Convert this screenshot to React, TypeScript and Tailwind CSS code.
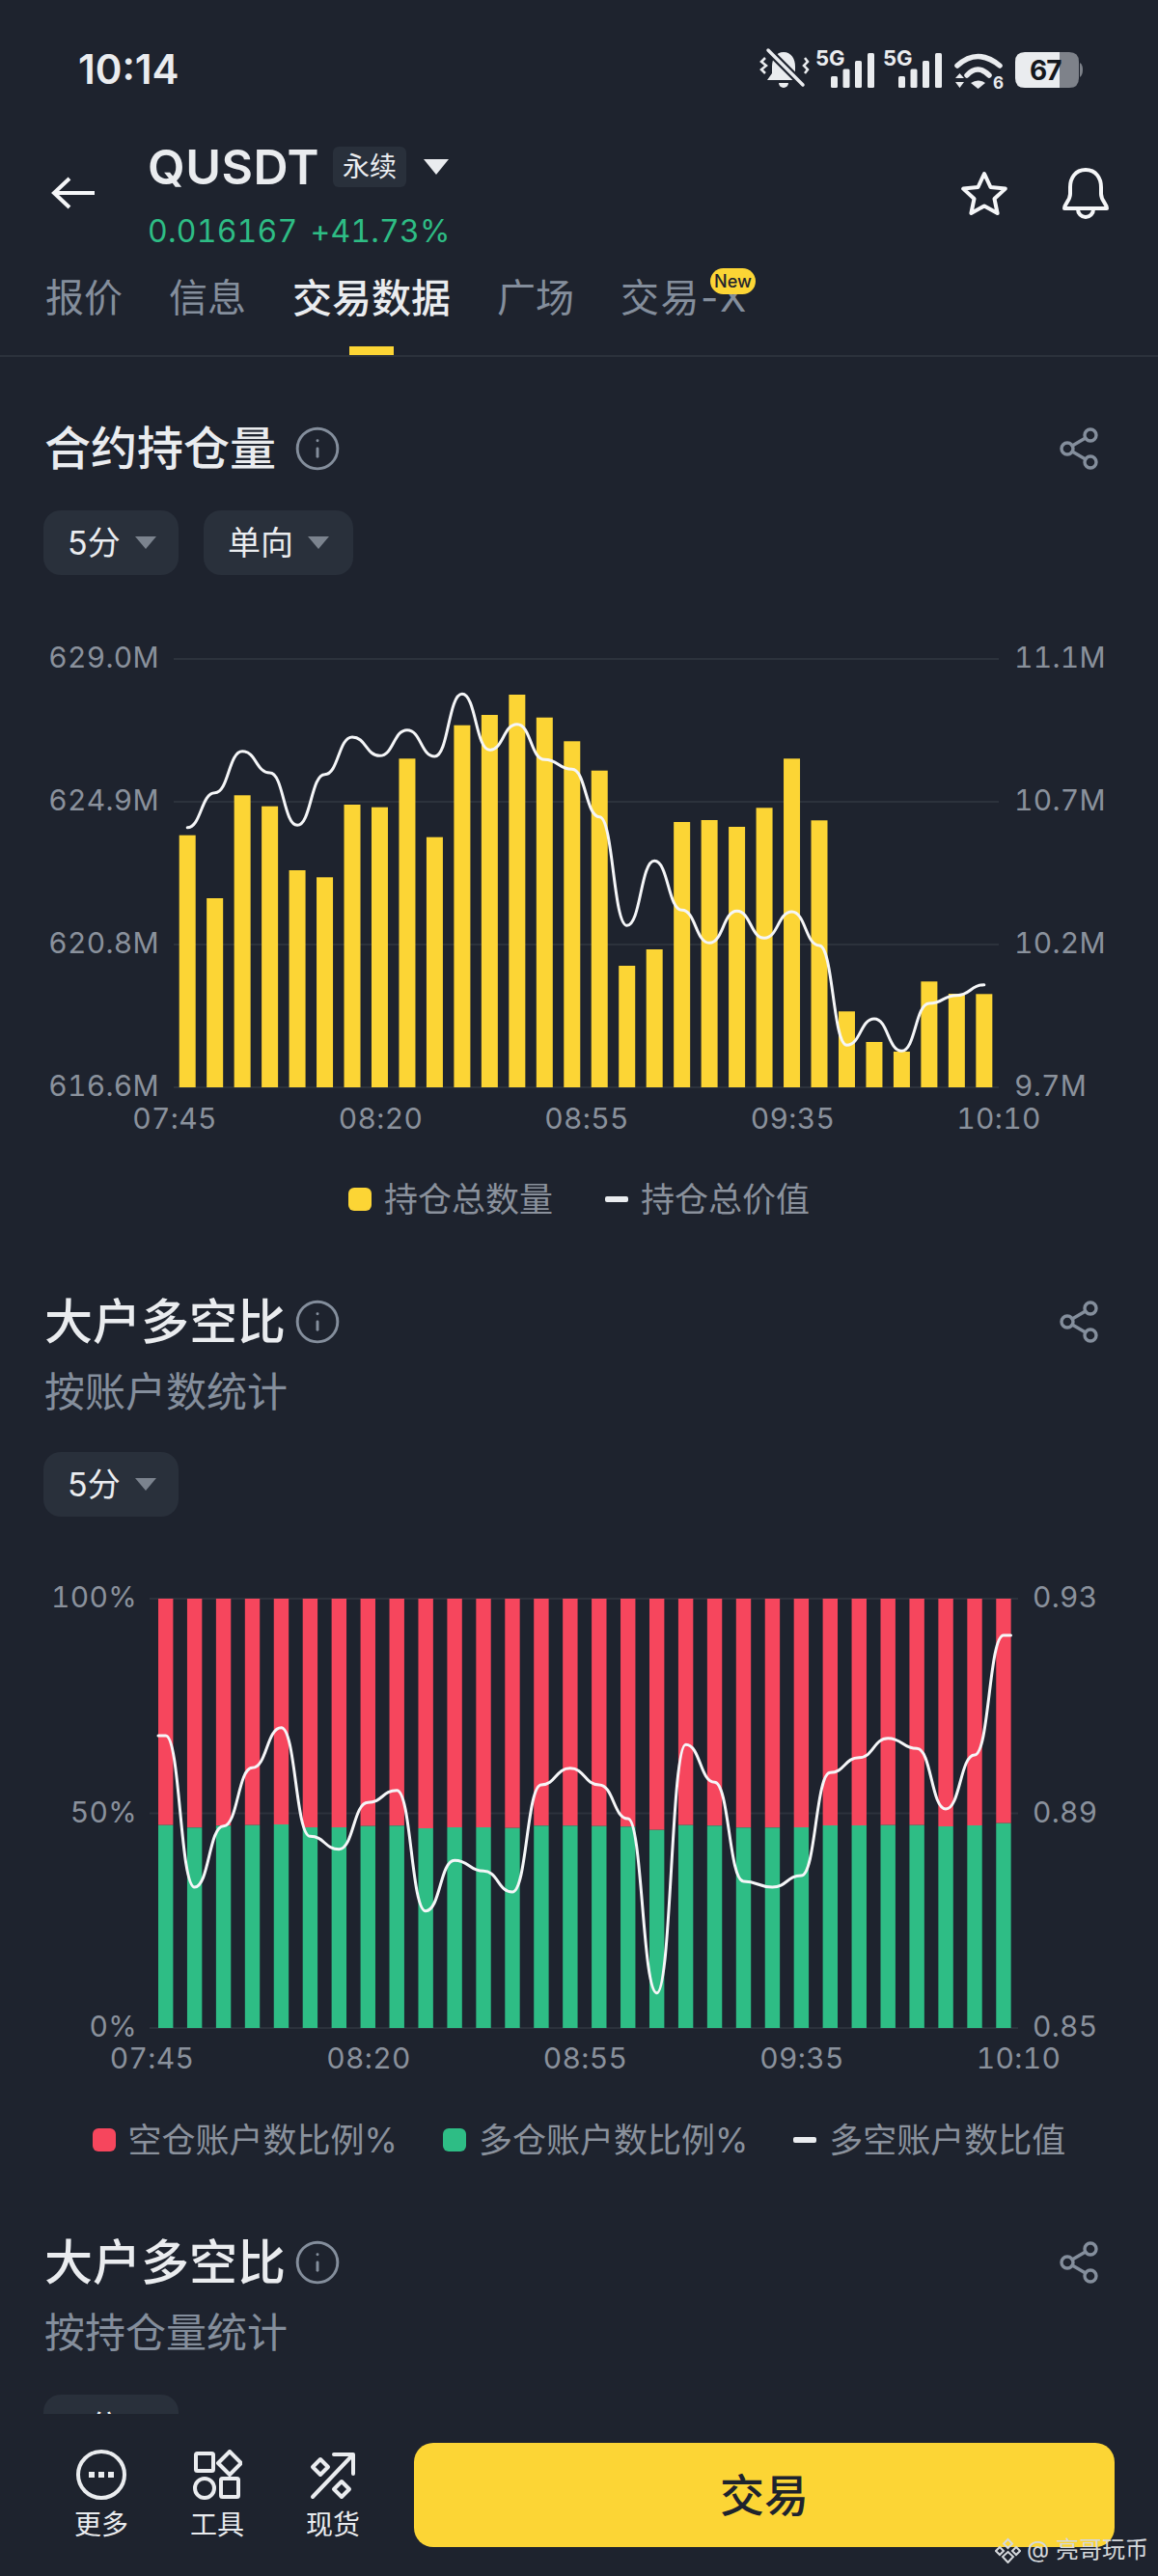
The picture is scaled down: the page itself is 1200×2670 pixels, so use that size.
import { Info, Share2 } from 'lucide-react';

type Point = [number, number];

const FONT = "font-['Inter','Noto_Sans_CJK_SC',sans-serif]";

// open interest chart, values are y positions in the chart's viewBox
const OI_BARS = [
  865.7, 931, 824.3, 835.7, 902, 909.3, 834, 836.7, 786.3, 867.7, 751.7, 741, 720, 743.7, 768.3,
  798.7, 1001, 984, 852, 850, 857, 837.3, 786.3, 850.3, 1048.3, 1080, 1090, 1017.3, 1030, 1030.3,
];
const OI_LINE = [
  857.7, 821.7, 778.7, 801, 855.3, 802.7, 764, 783.3, 756.7, 784, 719.3, 777.3, 750.7, 787.3, 797.3,
  846.7, 959.3, 892.3, 943.3, 977.3, 944.3, 972.3, 945, 980, 1083.3, 1056, 1089.3, 1040, 1031.7, 1020.7,
];

// long/short ratio chart
const RATIO_BARS = [
  1891.7, 1894.3, 1892.3, 1891.7, 1891, 1894, 1894, 1892.7, 1892.3, 1895, 1894, 1894, 1894.7, 1892.3,
  1892.3, 1892.7, 1893.3, 1896.7, 1891.7, 1892.3, 1894.3, 1894.3, 1894, 1892, 1892, 1891.7, 1891.7,
  1893, 1892, 1889.7,
];
const RATIO_LINE = [
  1799, 1956, 1892.7, 1832.3, 1790.7, 1903.3, 1916.7, 1868.3, 1855.7, 1980.7, 1928.3, 1939.3, 1961,
  1850, 1832.7, 1850, 1885, 2065.7, 1808.3, 1847.3, 1950, 1956, 1944, 1837.3, 1821.7, 1801.7, 1812.3,
  1875, 1819, 1695,
];

// flat tangents at each point give the line its shoulders
function smoothPath(pts: Point[]) {
  return pts.reduce((d, [x, y], i) => {
    if (i === 0) return `M${x} ${y}`;
    const [px, py] = pts[i - 1];
    const k = (x - px) / 2;
    return `${d} C${px + k} ${py} ${x - k} ${y} ${x} ${y}`;
  }, '');
}

function AxisText({ x, y, anchor, children }: { x: number; y: number; anchor: 'start' | 'middle' | 'end'; children: string }) {
  return (
    <text x={x} y={y} textAnchor={anchor} dominantBaseline="central" className="fill-[#8a919c] text-[30px] tracking-[0.3px] tabular-nums">
      {children}
    </text>
  );
}

function OpenInterestChart() {
  const ys = [683, 831, 979, 1127];
  const left = ['629.0M', '624.9M', '620.8M', '616.6M'];
  const right = ['11.1M', '10.7M', '10.2M', '9.7M'];
  const xs = ['07:45', '08:20', '08:55', '09:35', '10:10'];
  const line = OI_LINE.map((y, i): Point => [194.2 + i * 28.47, y]);
  return (
    <svg viewBox="0 660 1200 520" className="mt-[64px] block h-[520px] w-[1200px]">
      {ys.map((y) => (
        <line key={y} x1="180" x2="1035" y1={y} y2={y} stroke="#2c323c" strokeWidth="2" />
      ))}
      {OI_BARS.map((top, i) => (
        <rect key={i} x={185.7 + i * 28.47} y={top} width="17" height={1127 - top} fill="#fcd535" />
      ))}
      <path d={smoothPath(line)} fill="none" stroke="#f5f6f8" strokeWidth="3" strokeLinecap="round" />
      {ys.map((y, i) => (
        <AxisText key={y} x={165} y={y - 2} anchor="end">{left[i]}</AxisText>
      ))}
      {ys.map((y, i) => (
        <AxisText key={y} x={1051} y={y - 2} anchor="start">{right[i]}</AxisText>
      ))}
      {xs.map((t, i) => (
        <AxisText key={t} x={181 + i * 213.5} y={1159} anchor="middle">{t}</AxisText>
      ))}
    </svg>
  );
}

function RatioChart() {
  const ys = [1657, 1879.5, 2102];
  const left = ['100%', '50%', '0%'];
  const right = ['0.93', '0.89', '0.85'];
  const xs = ['07:45', '08:20', '08:55', '09:35', '10:10'];
  const centers = RATIO_LINE.map((y, i): Point => [171.7 + i * 29.94, y]);
  const line: Point[] = [[164, RATIO_LINE[0]], ...centers, [1047.5, RATIO_LINE[29]]];
  return (
    <svg viewBox="0 1630 1200 530" className="mt-[58px] block h-[530px] w-[1200px]">
      {ys.map((y) => (
        <line key={y} x1="155" x2="1055" y1={y} y2={y} stroke="#2c323c" strokeWidth="2" />
      ))}
      {RATIO_BARS.map((top, i) => (
        <g key={i}>
          <rect x={164 + i * 29.94} y="1657" width="15.4" height={top - 1657} fill="#f6465d" />
          <rect x={164 + i * 29.94} y={top} width="15.4" height={2102 - top} fill="#2ebd85" />
        </g>
      ))}
      <path d={smoothPath(line)} fill="none" stroke="#f5f6f8" strokeWidth="3" strokeLinecap="round" />
      {ys.map((y, i) => (
        <AxisText key={y} x={142} y={y - 2} anchor="end">{left[i]}</AxisText>
      ))}
      {ys.map((y, i) => (
        <AxisText key={y} x={1070} y={y - 2} anchor="start">{right[i]}</AxisText>
      ))}
      {xs.map((t, i) => (
        <AxisText key={t} x={157.5 + i * 224.5} y={2133} anchor="middle">{t}</AxisText>
      ))}
    </svg>
  );
}

function StatusIcons() {
  const signal = (dx: number) => (
    <g fill="#eaecef">
      <text x={845 + dx} y="67" className="text-[22px] font-bold">5G</text>
      <rect x={861 + dx} y="78" width="7" height="12" rx="1.5" />
      <rect x={873.5 + dx} y="70.5" width="7" height="19.5" rx="1.5" />
      <rect x={886 + dx} y="62" width="7" height="28" rx="1.5" />
      <rect x={899 + dx} y="54" width="7" height="36" rx="1.5" />
    </g>
  );
  return (
    <svg viewBox="786 46 338 48" className="h-[48px] w-[338px]">
      {/* muted + vibrate bell */}
      <path d="M812 53C804 53 800 60 800 68V75L795 82H829L824 75V68C824 60 820 53 812 53Z" fill="#eaecef" />
      <path d="M807 85H817A5 5 0 0 1 807 85Z" fill="#eaecef" />
      <line x1="795" y1="50" x2="832" y2="87" stroke="#1e232e" strokeWidth="8" />
      <line x1="796" y1="51" x2="832" y2="87" stroke="#eaecef" strokeWidth="3.5" strokeLinecap="round" />
      <path d="M793 59L789 63L794 67L789 71L793 75" fill="none" stroke="#eaecef" strokeWidth="2.5" />
      <path d="M834 59L837 63L833 67L837 71L834 75" fill="none" stroke="#eaecef" strokeWidth="2.5" />
      {signal(0)}
      {signal(70)}
      {/* wifi 6 */}
      <path d="M992 67Q1013 48 1036 67" fill="none" stroke="#eaecef" strokeWidth="5.5" strokeLinecap="round" />
      <path d="M1002 77Q1013 65 1025 77" fill="none" stroke="#eaecef" strokeWidth="5.5" strokeLinecap="round" />
      <path d="M1006 85Q1013.5 80 1021 85L1013.5 91Z" fill="#eaecef" />
      <path d="M990 80L994.5 75L999 80ZM990 84H999L994.5 90Z" fill="#eaecef" />
      <text x="1029" y="91" fill="#eaecef" className="text-[17px] font-bold">6</text>
      {/* battery */}
      <path d="M1098 53H1108Q1118 53 1118 63V80Q1118 90 1108 90H1098Z" fill="#7e828a" />
      <path d="M1119 64Q1122 66 1122 71Q1122 77 1119 79Z" fill="#7e828a" />
      <path d="M1062 53H1098V90H1062Q1052 90 1052 80V63Q1052 53 1062 53Z" fill="#eaecef" />
      <text x="1067" y="82" fill="#14171c" className="text-[28px] font-bold tracking-[-1px]">67</text>
    </svg>
  );
}

function StarIcon() {
  return (
    <svg viewBox="0 0 50 48" className="h-[48px] w-[50px]" fill="none" stroke="#f5f6f8" strokeWidth="4" strokeLinejoin="round">
      <path d="M25 3L31.5 17L46.8 18.6L35.5 29L38.6 44L25 36.4L11.4 44L14.5 29L3.2 18.6L18.5 17Z" />
    </svg>
  );
}

function BellIcon() {
  return (
    <svg viewBox="0 0 50 54" className="h-[54px] w-[50px]" fill="none" stroke="#f5f6f8" strokeWidth="4" strokeLinejoin="round">
      <path d="M25 2C14 2 9 11 9 20V27C9 34 3 37 3 42H47C47 37 41 34 41 27V20C41 11 36 2 25 2Z" />
      <path d="M17 43A8 8 0 0 0 33 43" />
    </svg>
  );
}

function MoreIcon() {
  return (
    <svg viewBox="0 0 52 52" className="h-[52px] w-[52px]">
      <circle cx="26" cy="26" r="24" fill="none" stroke="#eaecef" strokeWidth="4" />
      <rect x="13" y="23" width="6" height="6" fill="#eaecef" />
      <rect x="23" y="23" width="6" height="6" fill="#eaecef" />
      <rect x="33" y="23" width="6" height="6" fill="#eaecef" />
    </svg>
  );
}

function ToolsIcon() {
  return (
    <svg viewBox="0 0 52 52" className="h-[52px] w-[52px]" fill="none" stroke="#eaecef" strokeWidth="4" strokeLinejoin="round">
      <rect x="4" y="4" width="18" height="18" rx="1.5" />
      <path d="M39 2L51 14L39 26L27 14Z" />
      <circle cx="13" cy="40" r="10" />
      <rect x="30" y="30" width="18" height="19" rx="1.5" />
    </svg>
  );
}

function SpotIcon() {
  return (
    <svg viewBox="0 0 52 52" className="h-[52px] w-[52px]" fill="none" stroke="#eaecef" strokeWidth="4" strokeLinecap="round" strokeLinejoin="round">
      <path d="M5 49L46 6M27 5H47V25" />
      <path d="M13 10L21 18L13 26L5 18Z" />
      <path d="M35 33L43 41L35 49L27 41Z" />
    </svg>
  );
}

function Chip({ label, wide }: { label: string; wide?: boolean }) {
  return (
    <div className={`flex h-[67px] items-center gap-[15px] rounded-[18px] bg-[#29303b] pl-[25px] ${wide ? 'w-[155px]' : 'w-[140px]'}`}>
      <span className="text-[34px] text-[#eaecef]">{label}</span>
      <span className="h-0 w-0 border-x-[11px] border-t-[13px] border-x-transparent border-t-[#7b838e]" />
    </div>
  );
}

function SectionTitle({ title, size, infoGap }: { title: string; size: string; infoGap: string }) {
  return (
    <div className="flex h-[60px] items-center justify-between px-[46px]">
      <div className="flex items-center">
        <h2 className={`font-medium text-[#eaecef] ${size}`}>{title}</h2>
        <Info size={50} strokeWidth={1.4} className={`${infoGap} text-[#848e9c]`} />
      </div>
      <Share2 size={48} strokeWidth={1.7} className="mr-[12px] text-[#848e9c]" />
    </div>
  );
}

function LegendItem({ color, label, dash }: { color: string; label: string; dash?: boolean }) {
  return (
    <div className="flex items-center gap-[13px]">
      <span className={`${color} ${dash ? 'h-[6px] w-[24px] rounded-[2px]' : 'h-[24px] w-[24px] rounded-[6px]'}`} />
      <span className="text-[35px] leading-[40px] text-[#8a919c]">{label}</span>
    </div>
  );
}

function Tab({ label, active, badge }: { label: string; active?: boolean; badge?: boolean }) {
  return (
    <div className="relative h-[98px] pt-[11px]">
      <span className={`leading-[56px] ${active ? 'text-[41px] font-medium text-[#eaecef]' : 'text-[40px] text-[#848e9c]'} ${badge ? 'tracking-[1.5px]' : ''}`}>{label}</span>
      {active && <span className="absolute bottom-0 left-1/2 h-[9px] w-[46px] -translate-x-1/2 bg-[#fcd535]" />}
      {badge && (
        <span className="absolute left-[93px] top-[8px] flex h-[27px] w-[47px] items-center justify-center rounded-full bg-[#fcd535] text-[18px] font-medium text-[#1e232e]">
          New
        </span>
      )}
    </div>
  );
}

function BottomAction({ label, children }: { label: string; children: React.ReactNode }) {
  return (
    <div className="flex w-[120px] flex-col items-center">
      {children}
      <span className="mt-[8px] text-[28px] leading-[36px] text-[#eaecef]">{label}</span>
    </div>
  );
}

export default function App() {
  return (
    <div className={`relative flex h-[2670px] w-[1200px] flex-col overflow-hidden bg-[#1e232e] ${FONT}`}>
      <div className="h-[2502px] overflow-hidden">
        {/* status bar */}
        <div className="flex h-[142px] items-center justify-between pl-[81px] pr-[76px]">
          <span className="text-[42px] font-semibold text-[#eaecef]">10:14</span>
          <StatusIcons />
        </div>

        {/* market header */}
        <div className="flex h-[128px] items-start pl-[52px] pr-[50px]">
          <svg viewBox="0 0 46 34" className="mt-[41px] h-[34px] w-[46px]" fill="none" stroke="#f5f6f8" strokeWidth="4">
            <path d="M46 17H4M20 2L4 17L20 32" />
          </svg>
          <div className="ml-[55px] flex flex-col">
            <div className="mt-[8px] flex h-[46px] items-center">
              <span className="text-[50px] font-semibold leading-[46px] tracking-[0.5px] text-[#eaecef]">QUSDT</span>
              <span className="ml-[14px] flex h-[42px] w-[76px] items-center justify-center rounded-[6px] bg-[#29303b] text-[28px] text-[#eaecef]">
                永续
              </span>
              <span className="ml-[18px] h-0 w-0 border-x-[13px] border-t-[16px] border-x-transparent border-t-[#eaecef]" />
            </div>
            <div className="mt-[24px] flex gap-[13px] text-[32px] leading-[40px] tracking-[0.2px] text-[#2ebd85] tabular-nums">
              <span>0.016167</span>
              <span>+41.73%</span>
            </div>
          </div>
          <div className="ml-auto mt-[32px] flex items-center gap-[55px]">
            <StarIcon />
            <BellIcon />
          </div>
        </div>

        {/* tabs */}
        <div className="flex gap-[48px] border-b-2 border-[#2c323c] px-[47px]">
          <Tab label="报价" />
          <Tab label="信息" />
          <Tab label="交易数据" active />
          <Tab label="广场" />
          <Tab label="交易-X" badge />
        </div>

        {/* open interest */}
        <section className="pt-[65px]">
          <SectionTitle title="合约持仓量" size="text-[48px]" infoGap="ml-[18px]" />
          <div className="mt-[34px] flex gap-[26px] px-[45px]">
            <Chip label="5分" />
            <Chip label="单向" wide />
          </div>
          <OpenInterestChart />
          <div className="mt-[43px] flex justify-center gap-[54px]">
            <LegendItem color="bg-[#fcd535]" label="持仓总数量" />
            <LegendItem color="bg-[#eaecef]" label="持仓总价值" dash />
          </div>
        </section>

        {/* top trader accounts ratio */}
        <section className="pt-[77px]">
          <SectionTitle title="大户多空比" size="text-[50px]" infoGap="ml-[8px]" />
          <p className="mt-[16px] px-[46px] text-[42px] leading-[54px] text-[#848e9c]">按账户数统计</p>
          <div className="mt-[35px] px-[45px]">
            <Chip label="5分" />
          </div>
          <RatioChart />
          <div className="mt-[38px] flex justify-center gap-[47px]">
            <LegendItem color="bg-[#f6465d]" label="空仓账户数比例%" />
            <LegendItem color="bg-[#2ebd85]" label="多仓账户数比例%" />
            <LegendItem color="bg-[#eaecef]" label="多空账户数比值" dash />
          </div>
        </section>

        {/* top trader positions ratio, runs under the bottom bar */}
        <section className="pt-[77px]">
          <SectionTitle title="大户多空比" size="text-[50px]" infoGap="ml-[8px]" />
          <p className="mt-[16px] px-[46px] text-[42px] leading-[54px] text-[#848e9c]">按持仓量统计</p>
          <div className="mt-[37px] px-[45px]">
            <Chip label="5分" />
          </div>
        </section>
      </div>

      {/* bottom bar */}
      <div className="flex h-[168px] pl-[45px] pt-[30px]">
        <div className="flex pt-[7px]">
          <BottomAction label="更多"><MoreIcon /></BottomAction>
          <BottomAction label="工具"><ToolsIcon /></BottomAction>
          <BottomAction label="现货"><SpotIcon /></BottomAction>
        </div>
        <button className="ml-[24px] h-[108px] w-[726px] rounded-[20px] bg-[#fcd535] text-[46px] font-medium text-[#1e232e]">
          交易
        </button>
      </div>

      {/* watermark */}
      <div className="absolute bottom-[13px] right-[10px] flex items-center gap-[6px] text-[24px] leading-[28px] text-[#d5d8dc]">
        <svg viewBox="0 0 27 27" className="h-[27px] w-[27px]" fill="none" stroke="#d5d8dc" strokeWidth="2">
          <path d="M13.5 2L18 6.5L13.5 11L9 6.5Z" />
          <path d="M5 10L9 14L5 18L1 14Z" />
          <path d="M22 10L26 14L22 18L18 14Z" />
          <path d="M13.5 15L19 20L13.5 26L8 20Z" />
        </svg>
        <span>@ 亮哥玩币</span>
      </div>
    </div>
  );
}
